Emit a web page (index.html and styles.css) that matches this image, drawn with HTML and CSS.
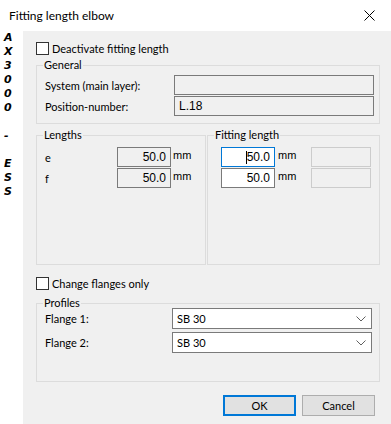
FILE: index.html
```html
<!DOCTYPE html>
<html lang="en">

<head>
    <meta charset="UTF-8">
    <title>Fitting length elbow</title>
    <link rel="stylesheet" href="styles.css">
</head>

<body>
    <div class="titlebar">
        <span class="title">Fitting length elbow</span>
        <svg class="close" width="11" height="11" viewBox="0 0 11 11">
            <path d="M0.5 0.5 L10.5 10.5 M10.5 0.5 L0.5 10.5" stroke="#000" stroke-width="1" fill="none" />
        </svg>
    </div>
    <div class="main">
        <div class="strip">
            <span>A</span><span>X</span><span>3</span><span>0</span><span>0</span><span>0</span>
            <span>&nbsp;</span><span>-</span><span>&nbsp;</span><span>E</span><span>S</span><span>S</span>
        </div>
        <div class="dialog">
            <label class="check"><i class="box"></i>Deactivate fitting length</label>

            <fieldset class="group general">
                <legend>General</legend>
                <div class="rows">
                    <span>System (main layer):</span>
                    <div class="field readonly"></div>
                    <span>Position-number:</span>
                    <div class="field readonly left">L.18</div>
                </div>
            </fieldset>

            <div class="pair">
                <fieldset class="group lengths">
                    <legend>Lengths</legend>
                    <div class="rows">
                        <span>e</span>
                        <div class="field readonly num">50.0</div>
                        <span class="unit">mm</span>
                        <span>f</span>
                        <div class="field readonly num">50.0</div>
                        <span class="unit">mm</span>
                    </div>
                </fieldset>
                <fieldset class="group fitting">
                    <legend>Fitting length</legend>
                    <div class="rows">
                        <div class="field edit num focus"><i class="caret"></i>50.0</div>
                        <span class="unit">mm</span>
                        <div class="field off"></div>
                        <div class="field edit num">50.0</div>
                        <span class="unit">mm</span>
                        <div class="field off"></div>
                    </div>
                </fieldset>
            </div>

            <label class="check flanges"><i class="box"></i>Change flanges only</label>

            <fieldset class="group profiles">
                <legend>Profiles</legend>
                <div class="rows">
                    <span>Flange 1:</span>
                    <div class="select">SB 30<svg width="10" height="6" viewBox="0 0 10 6"><path d="M0.5 0.5 L5 5 L9.5 0.5" stroke="#606060" fill="none" /></svg></div>
                    <span>Flange 2:</span>
                    <div class="select">SB 30<svg width="10" height="6" viewBox="0 0 10 6"><path d="M0.5 0.5 L5 5 L9.5 0.5" stroke="#606060" fill="none" /></svg></div>
                </div>
            </fieldset>

            <div class="buttons">
                <button class="btn default">OK</button>
                <button class="btn">Cancel</button>
            </div>
        </div>
    </div>
</body>

</html>
```

FILE: styles.css
```css
html,
body {
    margin: 0;
    padding: 0;
}

body {
    width: 391px;
    height: 424px;
    overflow: hidden;
    background: #fff;
    font-family: "Lato", "Noto Sans", sans-serif;
    font-size: 11px;
    color: #000;
}

.titlebar {
    height: 31px;
    display: flex;
    align-items: center;
    justify-content: space-between;
    padding: 0 16px 0 9px;
    box-sizing: border-box;
    font-size: 12px;
}

.title {
    margin-top: -1px;
}

.close {
    display: block;
    margin-top: -1px;
}

.main {
    display: flex;
}

.strip {
    width: 23px;
    display: flex;
    flex-direction: column;
    padding-left: 4px;
    box-sizing: border-box;
    font-family: "DejaVu Sans", sans-serif;
    font-size: 11px;
    font-weight: bold;
    font-style: italic;
    line-height: 14px;
}

.dialog {
    flex: 1;
    height: 393px;
    background: #f0f0f0;
    padding: 11px 11px 0 13px;
    box-sizing: border-box;
}

.check {
    display: flex;
    align-items: center;
    gap: 3px;
    height: 13px;
    line-height: 13px;
}

.box {
    width: 11px;
    height: 11px;
    border: 1px solid #333;
    background: #fff;
}

.group {
    margin: 0;
    border: 1px solid #dcdcdc;
    padding: 0 4px 0 8px;
    box-sizing: border-box;
}

.group legend {
    padding: 0 1px;
    margin-left: -2px;
    line-height: 16px;
}

.general {
    margin-top: 2px;
    padding-top: 2px;
    padding-bottom: 7px;
}

.general .rows {
    display: grid;
    grid-template-columns: 129px 200px;
    grid-auto-rows: 20px;
    row-gap: 1px;
    align-items: center;
}

.field {
    height: 100%;
    box-sizing: border-box;
    border: 1px solid #7a7a7a;
    font-family: "Liberation Sans", sans-serif;
    font-size: 12px;
    display: flex;
    align-items: center;
    padding: 0 4px;
}

.readonly {
    background: #f0f0f0;
}

.edit {
    background: #fff;
}

.focus {
    border-color: #0078d7;
}

.off {
    border-color: #cccccc;
    background: #f0f0f0;
}

.num {
    justify-content: flex-end;
}

.caret {
    width: 1px;
    height: 13px;
    background: #000;
}

.unit {
    font-family: "Liberation Sans", sans-serif;
    font-size: 11px;
    align-self: start;
    padding-left: 2px;
    line-height: 17px;
}

.pair {
    display: flex;
    gap: 1px;
    margin-top: 3px;
}

.lengths,
.fitting {
    height: 138px;
    padding-top: 4px;
}

.lengths {
    width: 169px;
}

.fitting {
    flex: 1;
}

.lengths .rows {
    display: grid;
    grid-template-columns: 72px 54px 30px;
    grid-auto-rows: 20px;
    row-gap: 1px;
    align-items: center;
}

.fitting .rows {
    display: grid;
    grid-template-columns: 54px 36px 60px;
    grid-auto-rows: 20px;
    row-gap: 1px;
    margin-left: 5px;
}

.fitting .unit {
    padding-left: 3px;
}

.flanges {
    margin-top: 12px;
}

.profiles {
    margin-top: 5px;
    padding-bottom: 28px;
}

.profiles .rows {
    display: grid;
    grid-template-columns: 127px 200px;
    grid-auto-rows: 21px;
    row-gap: 3px;
    align-items: center;
    margin-top: -3px;
}

.select {
    height: 100%;
    box-sizing: border-box;
    border: 1px solid #7a7a7a;
    background: #fff;
    display: flex;
    align-items: center;
    justify-content: space-between;
    padding: 0 5px 0 4px;
}

.buttons {
    display: flex;
    justify-content: flex-end;
    gap: 6px;
    margin-top: 13px;
    padding-right: 5px;
}

.btn {
    width: 73px;
    height: 21px;
    margin: 0;
    padding: 0;
    border: 1px solid #adadad;
    background: #e1e1e1;
    font-family: "Lato", "Noto Sans", sans-serif;
    font-size: 11px;
    color: #000;
}

.default {
    border: 2px solid #0078d7;
}
```
